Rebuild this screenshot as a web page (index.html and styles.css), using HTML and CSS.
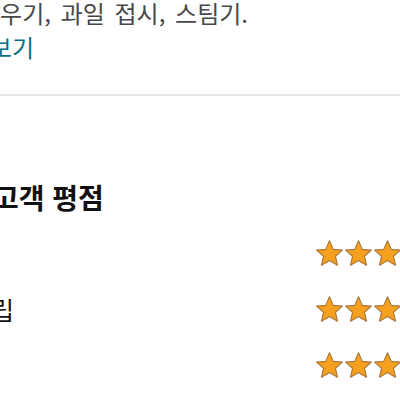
FILE: index.html
```html
<!DOCTYPE html>
<html lang="ko">
<head>
<meta charset="utf-8">
<link rel="stylesheet" href="styles.css">
</head>
<body>
<div class="page">
  <section class="desc">
    <p class="desc-text">비우기, 과일 접시, 스팀기.</p>
    <a class="more">더 보기</a>
  </section>
  <hr class="divider">
  <section class="ratings">
    <h2 class="title">고객 평점</h2>
    <div class="rows">
      <div class="row">
        <span class="label label-1">가치</span>
        <span class="stars">
          <svg viewBox="0 0 24 24"><path d="M12 2.2l2.9 6.6 7.1.6-5.4 4.7 1.6 7-6.2-3.7-6.2 3.7 1.6-7L2 9.4l7.1-.6z"/></svg>
          <svg viewBox="0 0 24 24"><path d="M12 2.2l2.9 6.6 7.1.6-5.4 4.7 1.6 7-6.2-3.7-6.2 3.7 1.6-7L2 9.4l7.1-.6z"/></svg>
          <svg viewBox="0 0 24 24"><path d="M12 2.2l2.9 6.6 7.1.6-5.4 4.7 1.6 7-6.2-3.7-6.2 3.7 1.6-7L2 9.4l7.1-.6z"/></svg>
        </span>
      </div>
      <div class="row">
        <span class="label label-2">그립</span>
        <span class="stars">
          <svg viewBox="0 0 24 24"><path d="M12 2.2l2.9 6.6 7.1.6-5.4 4.7 1.6 7-6.2-3.7-6.2 3.7 1.6-7L2 9.4l7.1-.6z"/></svg>
          <svg viewBox="0 0 24 24"><path d="M12 2.2l2.9 6.6 7.1.6-5.4 4.7 1.6 7-6.2-3.7-6.2 3.7 1.6-7L2 9.4l7.1-.6z"/></svg>
          <svg viewBox="0 0 24 24"><path d="M12 2.2l2.9 6.6 7.1.6-5.4 4.7 1.6 7-6.2-3.7-6.2 3.7 1.6-7L2 9.4l7.1-.6z"/></svg>
        </span>
      </div>
      <div class="row">
        <span class="label label-3">내구성</span>
        <span class="stars">
          <svg viewBox="0 0 24 24"><path d="M12 2.2l2.9 6.6 7.1.6-5.4 4.7 1.6 7-6.2-3.7-6.2 3.7 1.6-7L2 9.4l7.1-.6z"/></svg>
          <svg viewBox="0 0 24 24"><path d="M12 2.2l2.9 6.6 7.1.6-5.4 4.7 1.6 7-6.2-3.7-6.2 3.7 1.6-7L2 9.4l7.1-.6z"/></svg>
          <svg viewBox="0 0 24 24"><path d="M12 2.2l2.9 6.6 7.1.6-5.4 4.7 1.6 7-6.2-3.7-6.2 3.7 1.6-7L2 9.4l7.1-.6z"/></svg>
        </span>
      </div>
    </div>
  </section>
</div>
</body>
</html>
```
FILE: styles.css
```css
html, body {
  margin: 0;
  padding: 0;
  background: #fff;
  overflow: hidden;
  width: 400px;
  height: 400px;
}
.page {
  font-family: "Noto Sans CJK KR", "Noto Sans", sans-serif;
  color: #333;
}
.desc {
  display: flex;
  flex-direction: column;
}
.desc-text {
  margin: -4px 0 0 -22px;
  font-size: 24px;
  line-height: 34px;
  color: #484848;
  word-spacing: 3px;
  white-space: nowrap;
}
.more {
  margin-left: -39px;
  font-size: 24px;
  line-height: 34px;
  color: #0a6f82;
  white-space: nowrap;
}
.divider {
  border: 0;
  height: 2px;
  background: #e6e6e6;
  margin: 30px 0 0 0;
}
.ratings {
  padding-top: 81px;
}
.title {
  margin: 0 0 0 -7px;
  font-size: 28px;
  line-height: 40px;
  font-weight: 700;
  color: #111;
  white-space: nowrap;
}
.rows {
  margin-top: 8px;
  display: flex;
  flex-direction: column;
}
.row {
  display: flex;
  justify-content: space-between;
  align-items: center;
  height: 56px;
}
.label {
  font-size: 25px;
  color: #111;
  white-space: nowrap;
}
.label-1 { margin-left: -80px; }
.label-2 { margin-left: -32px; }
.label-3 { margin-left: -110px; }
.stars {
  display: flex;
  gap: 0;
  margin-right: -3px;
}
.stars svg {
  width: 31px;
  height: 31px;
  margin-left: -2px;
  fill: #f7a01f;
  stroke: #a8783c;
  stroke-width: 0.9;
  stroke-linejoin: round;
}
```
